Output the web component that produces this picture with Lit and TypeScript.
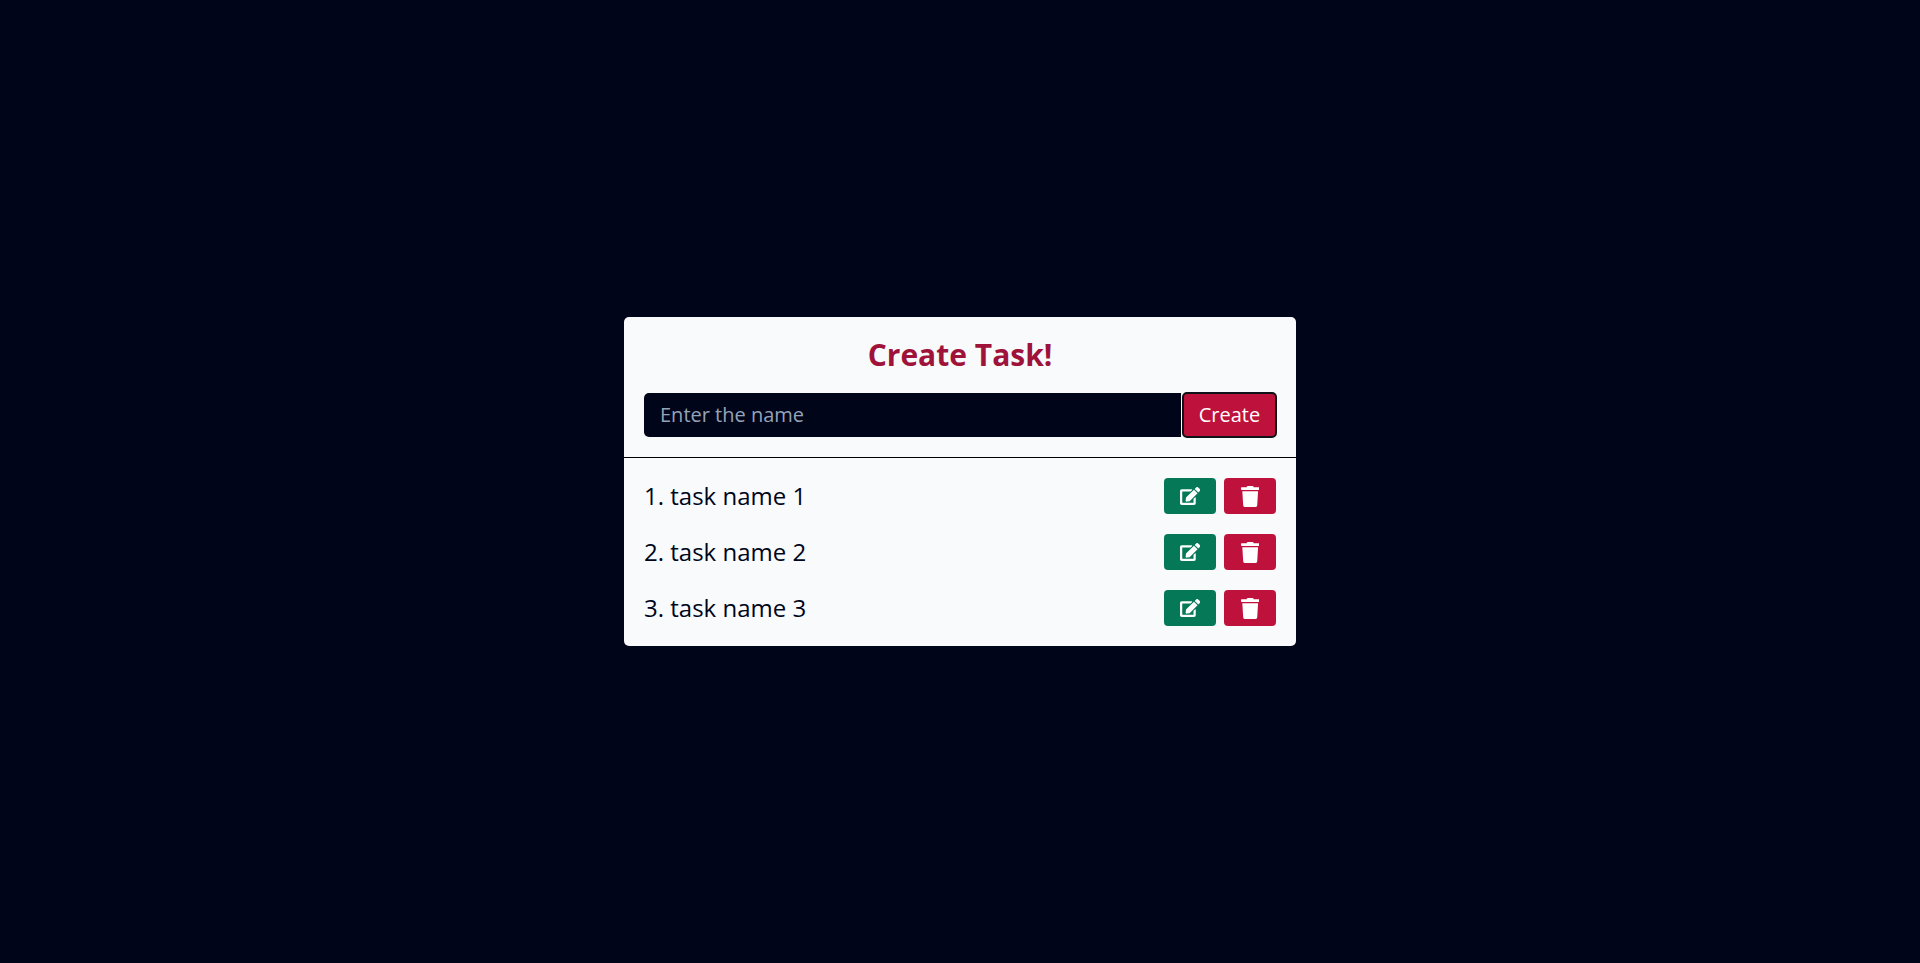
import { LitElement, html, css, svg } from "lit";
import { customElement } from "lit/decorators.js";

const editIcon = svg`<path d="M402.6 83.2l90.2 90.2c3.8 3.8 3.8 10 0 13.8L274.4 405.6l-92.8 10.3c-12.4 1.4-22.9-9.1-21.5-21.5l10.3-92.8L388.8 83.2c3.8-3.8 10-3.8 13.8 0zm162-22.9l-48.8-48.8c-15.2-15.2-39.9-15.2-55.2 0l-35.4 35.4c-3.8 3.8-3.8 10 0 13.8l90.2 90.2c3.8 3.8 10 3.8 13.8 0l35.4-35.4c15.2-15.3 15.2-40 0-55.2zM384 346.2V448H64V128h229.8c3.2 0 6.2-1.3 8.5-3.5l40-40c7.6-7.6 2.2-20.5-8.5-20.5H48C21.5 64 0 85.5 0 112v352c0 26.5 21.5 48 48 48h352c26.5 0 48-21.5 48-48V306.2c0-10.7-12.9-16-20.5-8.5l-40 40c-2.2 2.3-3.5 5.3-3.5 8.5z"/>`;
const trashIcon = svg`<path d="M432 32H312l-9.4-18.7A24 24 0 0 0 281.1 0H166.8a23.72 23.72 0 0 0-21.4 13.3L136 32H16A16 16 0 0 0 0 48v32a16 16 0 0 0 16 16h416a16 16 0 0 0 16-16V48a16 16 0 0 0-16-16zM53.2 467a48 48 0 0 0 47.9 45h245.8a48 48 0 0 0 47.9-45L416 128H32z"/>`;

@customElement("app-root")
export class AppRoot extends LitElement {
  static styles = css`
    :host {
      display: flex;
      align-items: center;
      justify-content: center;
      min-height: 963px;
      background: #00051a;
      font-family: "Open Sans", sans-serif;
    }
    .card {
      width: 672px;
      background: #f8fafc;
      border-radius: 5px;
      display: flex;
      flex-direction: column;
    }
    .top {
      padding: 17px 20px 19px;
      border-bottom: 1px solid #000;
      display: flex;
      flex-direction: column;
      gap: 17px;
    }
    h1 {
      margin: 0;
      font-size: 30px;
      line-height: 41px;
      font-weight: 700;
      text-align: center;
      color: #9f1239;
    }
    .form {
      display: flex;
      align-items: center;
    }
    .input {
      flex: 1;
      height: 44px;
      box-sizing: border-box;
      padding: 0 16px 2px;
      border: 0;
      outline: 0;
      border-radius: 5px 0 0 5px;
      background: #00051a;
      color: #fff;
      font: 400 20px "Open Sans", sans-serif;
      margin-right: 1px;
      min-width: 0;
    }
    .input::placeholder {
      color: #94a3b8;
      opacity: 1;
    }
    .create {
      width: 95px;
      height: 46px;
      margin-right: -1px;
      box-sizing: border-box;
      border: 2px solid #0f1216;
      border-radius: 5px;
      background: #be123c;
      color: #fff;
      padding: 0 0 2px;
      font: 400 20px "Open Sans", sans-serif;
    }
    .list {
      padding: 20px;
      display: flex;
      flex-direction: column;
      gap: 20px;
    }
    .row {
      display: flex;
      align-items: center;
      height: 36px;
    }
    .name {
      flex: 1;
      font-size: 24px;
      font-weight: 400;
      color: #00051a;
      padding-bottom: 1px;
    }
    .actions {
      display: flex;
      gap: 8px;
    }
    .btn {
      width: 52px;
      height: 36px;
      padding: 0;
      border: 0;
      border-radius: 4px;
      display: flex;
      align-items: center;
      justify-content: center;
      color: #fff;
    }
    .btn.edit { background: #047857; }
    .btn.del { background: #be123c; }
    .btn svg { fill: currentColor; display: block; }
  `;

  render() {
    const tasks = ["task name 1", "task name 2", "task name 3"];
    return html`
      <div class="card">
        <div class="top">
          <h1>Create Task!</h1>
          <div class="form">
            <input class="input" placeholder="Enter the name" />
            <button class="create">Create</button>
          </div>
        </div>
        <div class="list">
          ${tasks.map(
            (t, i) => html`
              <div class="row">
                <div class="name">${i + 1}. ${t}</div>
                <div class="actions">
                  <button class="btn edit"><svg width="20.25" height="18" viewBox="0 0 576 512">${editIcon}</svg></button>
                  <button class="btn del"><svg width="18.4" height="21" viewBox="0 0 448 512">${trashIcon}</svg></button>
                </div>
              </div>
            `
          )}
        </div>
      </div>
    `;
  }
}
